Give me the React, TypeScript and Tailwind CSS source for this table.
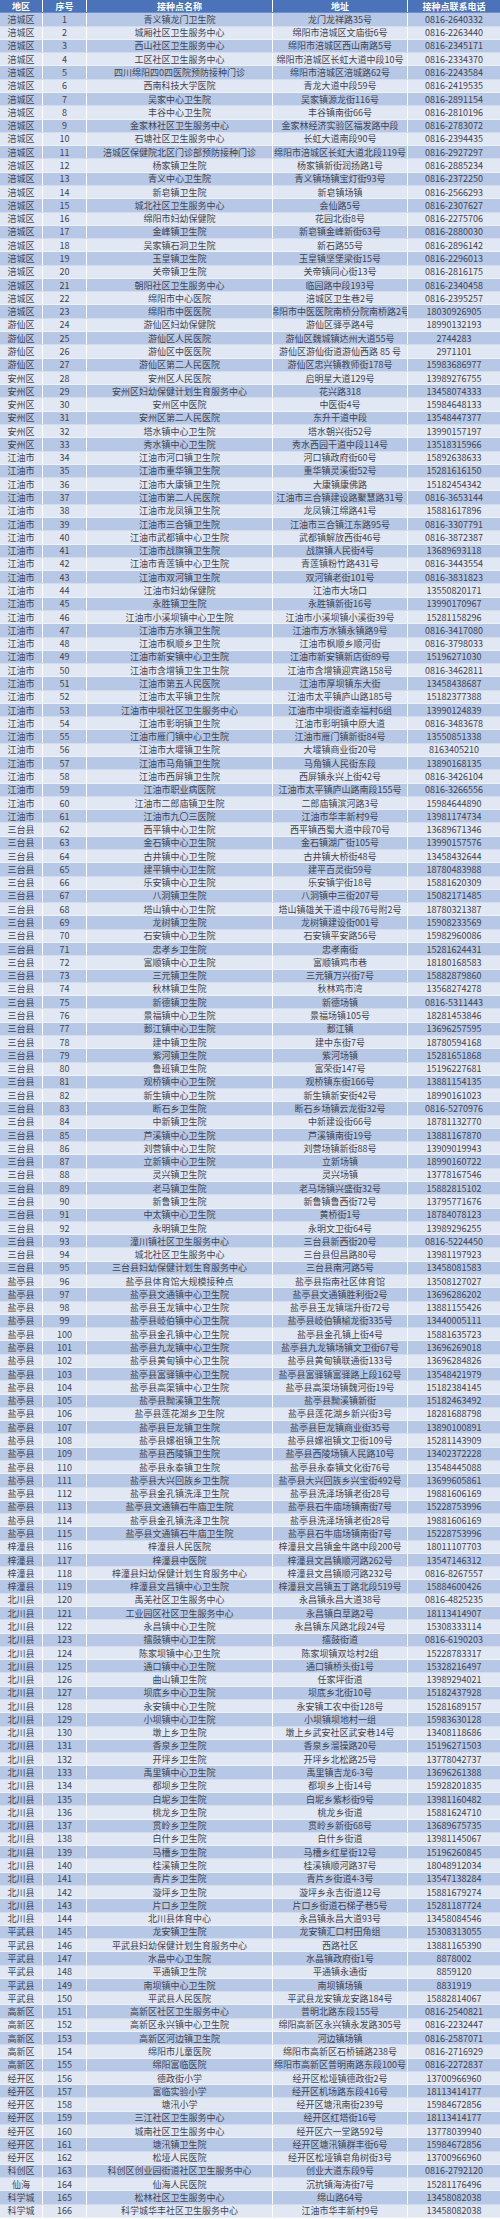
import React from "react";

const raw = `涪城区|青义镇龙门卫生院|龙门龙祥路35号|0816-2640332
涪城区|城厢社区卫生服务中心|绵阳市涪城区文庙街6号|0816-2263440
涪城区|西山社区卫生服务中心|绵阳市涪城区西山南路5号|0816-2345171
涪城区|工区社区卫生服务中心|绵阳市涪城区长虹大道中段10号|0816-2334370
涪城区|四川绵阳四0四医院预防接种门诊|绵阳市涪城区涪城路62号|0816-2243584
涪城区|西南科技大学医院|青龙大道中段59号|0816-2419535
涪城区|吴家中心卫生院|吴家镇源龙街116号|0816-2891154
涪城区|丰谷中心卫生院|丰谷镇南街66号|0816-2810196
涪城区|金家林社区卫生服务中心|金家林经济实验区福发路中段|0816-2783072
涪城区|石塘社区卫生服务中心|长虹大道南段90号|0816-2394435
涪城区|涪城区保健院北区门诊部预防接种门诊|绵阳市涪城区长虹大道北段119号|0816-2927297
涪城区|杨家镇卫生院|杨家镇新街润扬路1号|0816-2885234
涪城区|青义中心卫生院|青义镇场镇宝灯街93号|0816-2372250
涪城区|新皂镇卫生院|新皂镇场镇|0816-2566293
涪城区|城北社区卫生服务中心|会仙路5号|0816-2307627
涪城区|绵阳市妇幼保健院|花园北街8号|0816-2275706
涪城区|金峰镇卫生院|新皂镇金峰新街63号|0816-2880030
涪城区|吴家镇石洞卫生院|新石路55号|0816-2896142
涪城区|玉皇镇卫生院|玉皇镇坚堡梁街15号|0816-2296013
涪城区|关帝镇卫生院|关帝镇同心街13号|0816-2816175
涪城区|朝阳社区卫生服务中心|临园路中段193号|0816-2340458
涪城区|绵阳市中心医院|涪城区卫生巷2号|0816-2395257
涪城区|绵阳市中医医院|绵阳市中医医院南桥分院南桥路2号|18030926905
游仙区|游仙区妇幼保健院|游仙区驿亭路4号|18990132193
游仙区|游仙区人民医院|游仙区魏城镇达州大道55号|2744283
游仙区|游仙区中医医院|游仙区游仙街道游仙西路 85 号|2971101
游仙区|游仙区第二人民医院|游仙区忠兴镇教师街178号|15983686977
安州区|安州区人民医院|启明星大道129号|13989276755
安州区|安州区妇幼保健计划生育服务中心|花兴路318|13458074333
安州区|安州区中医院|中医街4号|15984648133
安州区|安州区第二人民医院|东升干道中段|13548447377
安州区|塔水镇中心卫生院|塔水朝兴街52号|13990157197
安州区|秀水镇中心卫生院|秀水西园干道中段114号|13518315966
江油市|江油市河口镇卫生院|河口镇政府街60号|15892638633
江油市|江油市重华镇卫生院|重华镇灵溪街52号|15281616150
江油市|江油市大康镇卫生院|大康镇康佛路|15182454342
江油市|江油市第二人民医院|江油市三合镇建设路聚慧路31号|0816-3653144
江油市|江油市龙凤镇卫生院|龙凤镇江绵路41号|15881617896
江油市|江油市三合镇卫生院|江油市三合镇江东路95号|0816-3307791
江油市|江油市武都镇中心卫生院|武都镇解放西街46号|0816-3872387
江油市|江油市战旗镇卫生院|战旗镇人民街4号|13689693118
江油市|江油市青莲镇中心卫生院|青莲镇粉竹路431号|0816-3443554
江油市|江油市双河镇卫生院|双河镇老街101号|0816-3831823
江油市|江油市妇幼保健院|江油市大场口|13550820171
江油市|永胜镇卫生院|永胜镇新街16号|13990170967
江油市|江油市小溪坝镇中心卫生院|江油市小溪坝镇小溪街39号|15281158296
江油市|江油市方水镇卫生院|江油市方水镇永镇路9号|0816-3417080
江油市|江油市枫顺乡卫生院|江油市枫顺乡顺河街|0816-3798033
江油市|江油市新安镇中心卫生院|江油市新安镇新店街89号|15196271030
江油市|江油市含增镇卫生卫生院|江油市含增镇迎宾路158号|0816-3462811
江油市|江油市第五人民医院|江油市厚坝镇东大街|13458438687
江油市|江油市太平镇卫生院|江油市太平镇庐山路185号|15182377388
江油市|江油市中坝社区卫生服务中心|江油市中坝街道幸福村6组|13990124839
江油市|江油市彰明镇卫生院|江油市彰明镇中原大道|0816-3483678
江油市|江油市雁门镇中心卫生院|江油市雁门镇新街84号|13550851338
江油市|江油市大堰镇卫生院|大堰镇商业街20号|8163405210
江油市|江油市马角镇卫生院|马角镇人民街东段|13890168135
江油市|江油市西屏镇卫生院|西屏镇永兴上街42号|0816-3426104
江油市|江油市职业病医院|江油市太平镇庐山路南段155号|0816-3266556
江油市|江油市二郎庙镇卫生院|二郎庙镇滨河路3号|15984644890
江油市|江油市九〇三医院|江油市华丰新村9号|13981174734
三台县|西平镇中心卫生院|西平镇西蜀大道中段70号|13689671346
三台县|金石镇中心卫生院|金石镇湖广街105号|13990157576
三台县|古井镇中心卫生院|古井镇大桥街48号|13458432644
三台县|建平镇中心卫生院|建平百灵街59号|18780483988
三台县|乐安镇中心卫生院|乐安镇学街18号|15881620309
三台县|八洞镇卫生院|八洞镇中三街207号|15082171485
三台县|塔山镇中心卫生院|塔山镇雄关干道中段76号附2号|18780321387
三台县|龙树镇卫生院|龙树镇建设街001号|15908233569
三台县|石安镇中心卫生院|石安镇平安路56号|15982960086
三台县|忠孝乡卫生院|忠孝南街|15281624431
三台县|富顺镇中心卫生院|富顺镇鸡市巷|18180168583
三台县|三元镇卫生院|三元镇万兴街7号|15882879860
三台县|秋林镇卫生院|秋林鸡市湾|13568274278
三台县|新德镇卫生院|新德场镇|0816-5311443
三台县|景福镇中心卫生院|景福场镇105号|18281453846
三台县|郪江镇中心卫生院|郪江镇|13696257595
三台县|建中镇卫生院|建中东街7号|18780594168
三台县|紫河镇卫生院|紫河场镇|15281651868
三台县|鲁班镇卫生院|富荣街147号|15196227681
三台县|观桥镇中心卫生院|观桥镇东街166号|13881154135
三台县|新生镇中心卫生院|新生镇新安街42号|18990161023
三台县|断石乡卫生院|断石乡场镇云龙街32号|0816-5270976
三台县|中新镇卫生院|中新建设街66号|18781132770
三台县|芦溪镇中心卫生院|芦溪镇南街19号|13881167870
三台县|刘营镇中心卫生院|刘营场镇新街88号|13909019943
三台县|立新镇中心卫生院|立新场镇|18990160722
三台县|灵兴镇卫生院|灵兴场镇|13778167546
三台县|老马镇卫生院|老马场镇兴盛街32号|15882815102
三台县|新鲁镇卫生院|新鲁镇鲁西街72号|13795771676
三台县|中太镇中心卫生院|黄桥街1号|18784078123
三台县|永明镇卫生院|永明文卫街64号|13989296255
三台县|潼川镇社区卫生服务中心|三台县新西街20号|0816-5224450
三台县|城北社区卫生服务中心|三台县但昌路80号|13981197923
三台县|三台县妇幼保健计划生育服务中心|三台县南河路5号|13458081583
盐亭县|盐亭县体育馆大规模接种点|盐亭县指南社区体育馆|13508127027
盐亭县|盐亭县文通镇中心卫生院|盐亭县文通镇胜利街2号|13696286202
盐亭县|盐亭县玉龙镇中心卫生院|盐亭县玉龙镇瑞升街72号|13881155426
盐亭县|盐亭县岐伯镇中心卫生院|盐亭县岐伯镇榆龙街335号|13440005111
盐亭县|盐亭县金孔镇中心卫生院|盐亭县金孔镇上街4号|15881635723
盐亭县|盐亭县九龙镇中心卫生院|盐亭县九龙镇场镇文卫街67号|13696269018
盐亭县|盐亭县黄甸镇中心卫生院|盐亭县黄甸镇联通街133号|13696284826
盐亭县|盐亭县富驿镇中心卫生院|盐亭县富驿镇富驿路上段162号|13548421979
盐亭县|盐亭县高渠镇中心卫生院|盐亭县高渠场镇魏河街19号|15182384145
盐亭县|盐亭县黝溪镇卫生院|盐亭县黝溪镇新街|15182463492
盐亭县|盐亭县莲花湖乡卫生院|盐亭县莲花湖乡新兴街3号|18281688798
盐亭县|盐亭县巨龙镇卫生院|盐亭县巨龙镇商业街35号|13890100891
盐亭县|盐亭县嫘祖镇卫生院|盐亭县嫘祖镇文卫街109号|15281143909
盐亭县|盐亭县西陵镇卫生院|盐亭县西陵场镇人民路10号|13402372228
盐亭县|盐亭县永泰镇卫生院|盐亭县永泰镇文化街76号|13548445088
盐亭县|盐亭县大兴回族乡卫生院|盐亭县大兴回族乡兴宝街492号|13699605861
盐亭县|盐亭县金孔镇洗泽卫生院|盐亭县洗泽场镇老街28号|19881606169
盐亭县|盐亭县文通镇石牛庙卫生院|盐亭县石牛庙场镇南街7号|15228753996
盐亭县|盐亭县金孔镇洗泽卫生院|盐亭县洗泽场镇老街28号|19881606169
盐亭县|盐亭县文通镇石牛庙卫生院|盐亭县石牛庙场镇南街7号|15228753996
梓潼县|梓潼县人民医院|梓潼县文昌镇金牛路中段200号|18011107703
梓潼县|梓潼县中医院|梓潼县文昌镇顺河路262号|13547146312
梓潼县|梓潼县妇幼保健计划生育服务中心|梓潼县文昌镇顺河路232号|0816-8267557
梓潼县|梓潼县文昌镇中心卫生院|梓潼县文昌镇五丁路北段519号|15884600426
北川县|禹羌社区卫生服务中心|永昌镇永昌大道38号|0816-4825235
北川县|工业园区社区卫生服务中心|永昌镇白草路2号|18113414907
北川县|永昌镇中心卫生院|永昌镇东风路北段24号|15308333114
北川县|擂鼓镇中心卫生院|擂鼓街道|0816-6190203
北川县|陈家坝镇中心卫生院|陈家坝镇双埝村2组|15228783317
北川县|通口镇中心卫生院|通口镇桥头街1号|15328216497
北川县|曲山镇卫生院|任家坪街道|13989294021
北川县|坝底乡中心卫生院|坝底乡北街10号|15182437928
北川县|永安镇中心卫生院|永安镇工农中街128号|15281689157
北川县|小坝镇中心卫生院|小坝镇坝地村一组|15983630128
北川县|墩上乡卫生院|墩上乡武安社区武安巷14号|13408118686
北川县|香泉乡卫生院|香泉乡溜操路20号|15196271503
北川县|开坪乡卫生院|开坪乡北松路25号|13778042737
北川县|禹里镇中心卫生院|禹里镇吉龙6-3号|13696261388
北川县|都坝乡卫生院|都坝乡上街14号|15928201835
北川县|白坭乡卫生院|白坭乡紫杉街9号|13981160482
北川县|桃龙乡卫生院|桃龙乡街道|15881624710
北川县|贯岭乡卫生院|贯岭乡新街68号|13689675735
北川县|白什乡卫生院|白什乡街道|13981145067
北川县|马槽乡卫生院|马槽乡红星街12号|15196260845
北川县|桂溪镇卫生院|桂溪镇顺河路37号|18048912034
北川县|青片乡卫生院|青片乡街道4-3号|13547138284
北川县|漩坪乡卫生院|漩坪乡永吉街道12号|15881679274
北川县|片口乡卫生院|片口乡街道石梯子巷5号|15281187724
北川县|北川县体育中心|永昌镇永昌大道93号|13458084546
平武县|龙安镇卫生院|龙安镇汇口村田角组|15308313055
平武县|平武县妇幼保健计划生育服务中心|西路社区|13881165390
平武县|水晶中心卫生院|水晶镇政府街1号|8878002
平武县|平通镇卫生院|平通镇永通街|8859120
平武县|南坝镇中心卫生院|南坝镇场镇|8831919
平武县|平武县人民医院|平武县龙安镇龙安路184号|15882814067
高新区|高新区社区卫生服务中心|普明北路东段155号|0816-2540821
高新区|高新区永兴镇中心卫生院|绵阳高新区永兴镇永发路305号|0816-2232447
高新区|高新区河边镇卫生院|河边镇场镇|0816-2587071
高新区|绵阳市儿童医院|绵阳市高新区石桥铺路238号|0816-2716929
高新区|绵阳富临医院|绵阳市高新区普明南路东段100号|0816-2272837
经开区|德政街小学|经开区松垭镇德政街2号|13700966960
经开区|富临实验小学|经开区机场路东段416号|18113414177
经开区|塘汛小学|经开区塘汛南街239号|15984672856
经开区|三江社区卫生服务中心|经开区红塔街16号|18113414177
经开区|城南社区卫生服务中心|经开区六一堂路592号|13778039940
经开区|塘汛镇卫生院|经开区塘汛镇群丰街6号|15984672856
经开区|松垭人民医院|经开区松垭镇皂角树街3号|13700966960
科创区|科创区创业园街道社区卫生服务中心|创业大道东段9号|0816-2792120
仙海|仙海人民医院|沉抗镇海涛街7号|15281176496
科学城|松林社区卫生服务中心|绵山路64号|13458082038
科学城|科学城华丰社区卫生服务中心|江油市华丰新村9号|13458082038`;

const rows = raw.split("\n").map((l) => l.split("|"));

const ODD = "grid grid-cols-[43px_44px_186px_135px_92px] h-[13.287px] bg-[#b7c8e6] border-b border-[#d2dcef]";
const EVEN = "grid grid-cols-[43px_44px_186px_135px_92px] h-[13.287px] bg-[#e1e8f4] border-b border-[#eef2f9]";
const CELL = "flex items-center justify-center whitespace-nowrap overflow-hidden border-r border-white leading-none";

export default function App() {
  return (
    <div
      className="w-[500px] bg-white text-[9px] text-[#3e4350]"
      style={{ fontFamily: '"Noto Sans CJK SC", "Noto Sans", sans-serif' }}
    >
      <div className="grid grid-cols-[43px_44px_186px_135px_92px] h-[13.287px] bg-[#4a73ba] text-white font-bold border-b border-[#6d8ecb]">
        <div className={CELL}>地区</div>
        <div className={CELL}>序号</div>
        <div className={CELL}>接种点名称</div>
        <div className={CELL}>地址</div>
        <div className="flex items-center justify-center whitespace-nowrap overflow-hidden leading-none">接种点联系电话</div>
      </div>
      {rows.map((r, i) => (
        <div key={i} className={i % 2 === 0 ? ODD : EVEN}>
          <div className={CELL}>{r[0]}</div>
          <div className={CELL}>{i + 1}</div>
          <div className={CELL}>{r[1]}</div>
          <div className={CELL}>{r[2]}</div>
          <div className="flex items-center justify-center whitespace-nowrap overflow-hidden leading-none">{r[3]}</div>
        </div>
      ))}
    </div>
  );
}
